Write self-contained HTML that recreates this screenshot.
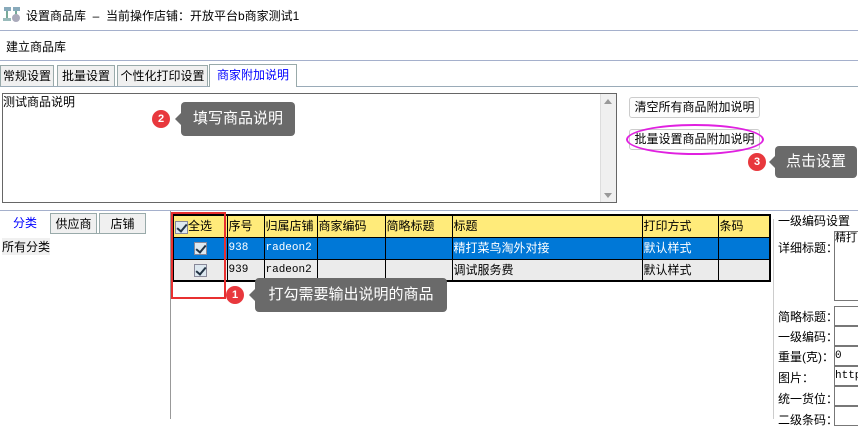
<!DOCTYPE html>
<html><head><meta charset="utf-8"><style>
*{margin:0;padding:0;box-sizing:border-box}
body{width:858px;height:419px;position:relative;background:#fff;font-family:"Liberation Sans","Noto Sans CJK SC",sans-serif;font-size:12px;color:#000;overflow:hidden}
.a{position:absolute;white-space:nowrap}
.tab{position:absolute;top:65px;height:21px;border:1px solid #9aa;border-bottom:none;background:#f0f0f0;text-align:center;line-height:20px;font-size:12px}
.tip{position:absolute;background:#6a6a6a;color:#fff;border-radius:4px;font-size:15px;text-align:center}
.tip:before{content:"";position:absolute;left:-6px;top:50%;margin-top:-6px;border:6px solid transparent;border-left:0;border-right-color:#6a6a6a}
.badge{position:absolute;width:18px;height:18px;border-radius:50%;background:#e8383d;color:#fff;font-size:11px;text-align:center;line-height:18px;font-weight:bold}
table{border-collapse:collapse;position:absolute;left:172px;top:214px;width:599px;border:2px solid #000}
td{border:1px solid #000;height:22px;padding:0 1px;font-size:12px;line-height:20px;white-space:nowrap}
.h td{background:#ffeb7a}
.r1 td{background:#0078d7;color:#fff}
.r2 td{background:#ebebeb}
.m{font-family:"Liberation Mono",monospace;font-size:11px}
.cb{display:inline-block;width:13px;height:13px;border:1px solid #889;background:#dde8f0;position:relative;vertical-align:middle}
.cb:after{content:"";position:absolute;left:3px;top:0;width:4px;height:8px;border:solid #234;border-width:0 2px 2px 0;transform:rotate(40deg)}
.lbl{position:absolute;left:778px;font-size:12px}
.box{position:absolute;left:834px;width:30px;border:1px solid #777;border-right:none;background:#fff;line-height:18px;font-size:11px}
</style></head><body>
<svg class="a" style="left:3px;top:5px" width="18" height="18"><rect x="1" y="2" width="7" height="4" fill="#8ab"/><rect x="10" y="2" width="7" height="4" fill="#8ab"/><line x1="4" y1="6" x2="4" y2="13" stroke="#7a9" stroke-width="2"/><line x1="13" y1="6" x2="13" y2="12" stroke="#7a9" stroke-width="2"/><circle cx="13" cy="13" r="4" fill="#aab"/><rect x="0" y="13" width="8" height="3" fill="#9bb"/></svg>
<div class="a" style="left:26px;top:7px;font-size:12px">设置商品库 &nbsp;– &nbsp;当前操作店铺：开放平台b商家测试1</div>
<div class="a" style="left:0;top:30px;width:858px;height:1px;background:#a5b0cc"></div>
<div class="a" style="left:6px;top:38px">建立商品库</div>
<div class="a" style="left:0;top:60px;width:858px;height:1px;background:#a5b0cc"></div>
<div class="tab" style="left:0;width:54px">常规设置</div>
<div class="tab" style="left:57px;width:58px">批量设置</div>
<div class="tab" style="left:117px;width:91px">个性化打印设置</div>
<div class="tab" style="left:209px;width:88px;background:#fff;color:#00f;top:64px;height:23px;z-index:2">商家附加说明</div>
<div class="a" style="left:0;top:86px;width:858px;height:1px;background:#9aabb8"></div>
<div class="a" style="left:2px;top:93px;width:615px;height:110px;border:1px solid #666"></div>
<div class="a" style="left:600px;top:94px;width:16px;height:108px;background:#f0f0f0;border-left:1px solid #ddd"></div>
<div class="a" style="left:604px;top:99px;border:4px solid transparent;border-bottom:5px solid #999;border-top:0"></div>
<div class="a" style="left:604px;top:193px;border:4px solid transparent;border-top:5px solid #999;border-bottom:0"></div>
<div class="a" style="left:3px;top:93px">测试商品说明</div>
<div class="a" style="left:629px;top:97px;width:131px;height:21px;border:1px solid #ccc;border-radius:3px;background:#fdfdfd;text-align:center;line-height:19px">清空所有商品附加说明</div>
<div class="a" style="left:629px;top:129px;width:131px;height:21px;border:1px solid #ccc;border-radius:3px;background:#fdfdfd;text-align:center;line-height:19px">批量设置商品附加说明</div>
<div class="a" style="left:626px;top:124px;width:138px;height:31px;border:2px solid #e020e0;border-radius:50%"></div>
<div class="badge" style="left:748px;top:153px">3</div>
<div class="tip" style="left:775px;top:146px;width:82px;height:32px;line-height:32px">点击设置</div>
<div class="badge" style="left:152px;top:110px">2</div>
<div class="tip" style="left:181px;top:102px;width:114px;height:34px;line-height:34px">填写商品说明</div>
<div class="a" style="left:0;top:210px;width:858px;height:1px;background:#a5b0cc"></div>
<div class="a" style="left:0;top:213px;width:50px;height:21px;text-align:center;line-height:20px;color:#00f">分类</div>
<div class="tab" style="left:50px;top:213px;width:47px">供应商</div>
<div class="tab" style="left:99px;top:213px;width:47px">店铺</div>
<div class="a" style="left:50px;top:233px;width:96px;height:1px;background:#9aa"></div>
<div class="a" style="left:2px;top:238px;background:#f0f0f0">所有分类</div>
<div class="a" style="left:170px;top:211px;width:1px;height:208px;background:#999"></div>
<table>
<tr class="h"><td style="width:54px"><span class="cb"></span>全选</td><td style="width:37px">序号</td><td style="width:53px">归属店铺</td><td style="width:68px">商家编码</td><td style="width:67px">简略标题</td><td style="width:190px">标题</td><td style="width:76px">打印方式</td><td>条码</td></tr>
<tr class="r1"><td style="text-align:center"><span class="cb"></span></td><td class="m">938</td><td class="m">radeon2</td><td></td><td></td><td>精打菜鸟淘外对接</td><td>默认样式</td><td></td></tr>
<tr class="r2"><td style="text-align:center"><span class="cb"></span></td><td class="m">939</td><td class="m">radeon2</td><td></td><td></td><td>调试服务费</td><td>默认样式</td><td></td></tr>
</table>
<div class="a" style="left:171px;top:212px;width:55px;height:87px;border:2px solid #e83030"></div>
<div class="badge" style="left:226px;top:286px">1</div>
<div class="tip" style="left:255px;top:278px;width:192px;height:34px;line-height:34px">打勾需要输出说明的商品</div>
<div class="a" style="left:773px;top:219px;width:1px;height:200px;background:#ccc"></div>
<div class="a" style="left:776px;top:212px;background:#fff;padding:0 2px">一级编码设置</div>
<div class="lbl" style="top:239px">详细标题：</div>
<div class="box" style="top:231px;height:70px;line-height:12px">精打</div>
<div class="lbl" style="top:308px">简略标题：</div><div class="box" style="top:306px;height:20px"></div>
<div class="lbl" style="top:328px">一级编码：</div><div class="box" style="top:326px;height:20px"></div>
<div class="lbl" style="top:348px">重量(克)：</div><div class="box m" style="top:346px;height:20px">0</div>
<div class="lbl" style="top:369px">图片：</div><div class="box m" style="top:366px;height:20px">http</div>
<div class="lbl" style="top:390px">统一货位：</div><div class="box" style="top:386px;height:20px"></div>
<div class="lbl" style="top:411px">二级条码：</div><div class="box" style="top:406px;height:20px"></div>
</body></html>
